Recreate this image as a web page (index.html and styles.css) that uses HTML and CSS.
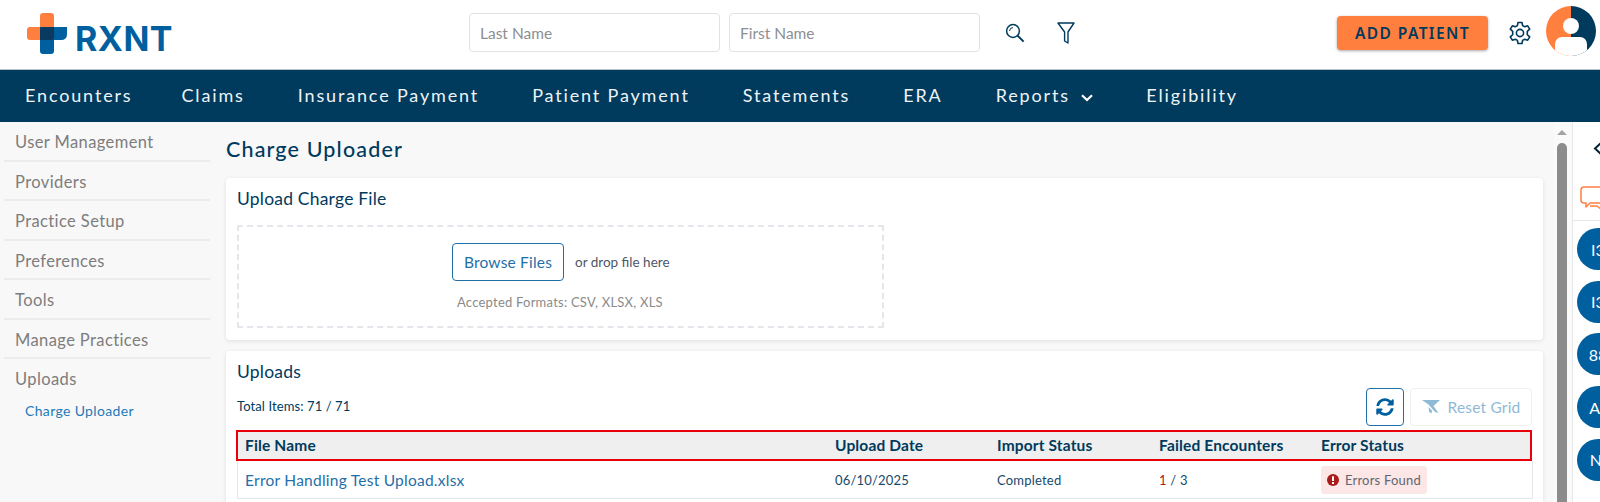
FILE: index.html
```html
<!DOCTYPE html>
<html>
<head>
<link rel="stylesheet" href="styles.css">
</head>
<body>

<header class="top-bar">
  <div class="logo">
    <svg class="logo-mark" width="40" height="41" viewBox="0 0 40 41">
      <path d="M13 3 Q13 0 16 0 H24 Q27 0 27 3 V27 H3 Q0 27 0 24 V17 Q0 14 3 14 H13 Z" fill="#ff7f3f"/>
      <path d="M13 14 H40 V21 Q40 27 34 27 H27 V38 Q27 41 24 41 H16 Q13 41 13 38 Z" fill="#00609f"/>
      <path d="M15 14 H27 V25 Q27 27 25 27 H13 V16 Q13 14 15 14 Z" fill="#0b3a60"/>
    </svg>
    <span class="logo-text">RXNT</span>
  </div>
  <div class="search-area">
    <input class="search-input" type="text" placeholder="Last Name">
    <input class="search-input" type="text" placeholder="First Name">
    <svg class="search-icon" width="20" height="20" viewBox="0 0 20 20" fill="none" stroke="#003a5d" stroke-width="1.5">
      <circle cx="8" cy="8" r="6.4"/>
      <path d="M4.6 8 A3.4 3.4 0 0 1 8 4.6" stroke-width="1"/>
      <path d="M12.6 12.6 L18.6 18.6" stroke-width="2"/>
    </svg>
    <svg class="filter-icon" width="18" height="22" viewBox="0 0 18 22" fill="none" stroke="#003a5d" stroke-width="1.4" stroke-linejoin="round">
      <path d="M1 1 H17 L11 10 V21 L7.6 19 V10 Z"/>
    </svg>
  </div>
  <div class="top-actions">
    <button class="add-patient">ADD PATIENT</button>
    <svg class="gear-icon" width="24" height="24" viewBox="0 0 24 24" fill="none" stroke="#003a5d" stroke-width="1.6" stroke-linejoin="round">
      <path d="M10 1.5 H14 L14.6 4.6 L16.7 5.8 L19.7 4.8 L21.7 8.2 L19.3 10.3 V13.7 L21.7 15.8 L19.7 19.2 L16.7 18.2 L14.6 19.4 L14 22.5 H10 L9.4 19.4 L7.3 18.2 L4.3 19.2 L2.3 15.8 L4.7 13.7 V10.3 L2.3 8.2 L4.3 4.8 L7.3 5.8 L9.4 4.6 Z"/>
      <circle cx="12" cy="12" r="3.6"/>
    </svg>
    <svg class="avatar" width="50" height="50" viewBox="0 0 50 50">
      <clipPath id="avatar-clip"><circle cx="25" cy="25" r="25"/></clipPath>
      <g clip-path="url(#avatar-clip)">
        <rect width="25" height="50" fill="#ff7f3f"/>
        <rect x="25" width="25" height="50" fill="#003a5d"/>
        <circle cx="25" cy="20" r="8" fill="#fff"/>
        <rect x="9" y="31" width="32" height="20" rx="7" fill="#fff"/>
      </g>
    </svg>
  </div>
</header>

<nav class="main-nav">
  <a class="nav-link first-link">Encounters</a>
  <a class="nav-link">Claims</a>
  <a class="nav-link">Insurance Payment</a>
  <a class="nav-link">Patient Payment</a>
  <a class="nav-link">Statements</a>
  <a class="nav-link">ERA</a>
  <a class="nav-link">Reports
    <svg class="nav-chevron" width="12" height="8" viewBox="0 0 12 8" fill="none" stroke="#fff" stroke-width="2.2"><path d="M1 1.2 L6 6 L11 1.2"/></svg>
  </a>
  <a class="nav-link">Eligibility</a>
</nav>

<div class="content-row">
  <aside class="side-menu">
    <div class="side-item">User Management</div>
    <div class="side-item">Providers</div>
    <div class="side-item">Practice Setup</div>
    <div class="side-item">Preferences</div>
    <div class="side-item">Tools</div>
    <div class="side-item">Manage Practices</div>
    <div class="side-item no-line">Uploads</div>
    <div class="side-sub">Charge Uploader</div>
  </aside>

  <main class="page">
    <h1 class="page-title">Charge Uploader</h1>

    <section class="card upload-card">
      <h2 class="card-title">Upload Charge File</h2>
      <div class="drop-zone">
        <div class="drop-row">
          <button class="browse-button">Browse Files</button>
          <span class="drop-text">or drop file here</span>
        </div>
        <div class="accepted">Accepted Formats: CSV, XLSX, XLS</div>
      </div>
    </section>

    <section class="card uploads-card">
      <h2 class="card-title">Uploads</h2>
      <div class="grid-tools">
        <span class="total-items">Total Items: 71 / 71</span>
        <button class="refresh-button">
          <svg width="18" height="18" viewBox="0 0 512 512" fill="#00609f"><path d="M370.7 133.3C339.5 104 298.9 88 255.800 88c-77.500 0-144.400 53.100-162.900 126.900-1.300 5.400-6.100 9.100-11.600 9.100H24.100c-7.500 0-13.200-6.800-11.800-14.200C33.900 94.900 134.800 8 256 8c66.400 0 126.800 26.100 171.300 68.700L463 41c15.100-15.100 41-4.400 41 17v134c0 13.300-10.700 24-24 24H346c-21.400 0-32.100-25.900-17-41zM32 296h134c21.400 0 32.100 25.900 17 41l-41.700 41.700c31.200 29.300 71.800 45.300 114.900 45.300 77.400 0 144.300-53.100 162.900-126.800 1.300-5.400 6.100-9.100 11.600-9.100h57.300c7.500 0 13.200 6.800 11.800 14.200C478.100 417.100 377.200 504 256 504c-66.400 0-126.800-26.100-171.300-68.700L49 471c-15.100 15.100-41 4.400-41-17V320c0-13.300 10.700-24 24-24z"/></svg>
        </button>
        <button class="reset-button">
          <svg width="18" height="16" viewBox="0 0 18 16" fill="#8fbad6"><path d="M0 1 H18 L11.500 7 L16.500 14 L13 13 L6.500 5.500 Z"/><path d="M6.500 8 L10 11.500 L9.500 14.500 L7.200 13 Z"/></svg>
          Reset Grid
        </button>
      </div>
      <div class="grid-head">
        <div class="col-name">File Name</div>
        <div class="col-date">Upload Date</div>
        <div class="col-status">Import Status</div>
        <div class="col-failed">Failed Encounters</div>
        <div class="col-error">Error Status</div>
      </div>
      <div class="grid-row">
        <div class="col-name"><a class="file-link">Error Handling Test Upload.xlsx</a></div>
        <div class="col-date">06/10/2025</div>
        <div class="col-status">Completed</div>
        <div class="col-failed"><span class="failed-count">1</span> / 3</div>
        <div class="col-error">
          <span class="error-badge">
            <svg width="12" height="12" viewBox="0 0 12 12"><circle cx="6" cy="6" r="6" fill="#a81c1c"/><rect x="5" y="2.300" width="2" height="4.700" fill="#fff"/><rect x="5" y="8" width="2" height="2" fill="#fff"/></svg>
            Errors Found
          </span>
        </div>
      </div>
    </section>
  </main>

  <div class="scroll-bar">
    <div class="scroll-arrow"></div>
    <div class="scroll-thumb"></div>
  </div>

  <aside class="side-panel">
    <div class="panel-top">
      <svg class="panel-back" width="9" height="13" viewBox="0 0 9 13" fill="none" stroke="#04243a" stroke-width="2"><path d="M8 1 L2 6.500 L8 12"/></svg>
      <svg class="panel-chat" width="30" height="26" viewBox="0 0 30 26" fill="none" stroke="#ff7f3f" stroke-width="1.500" stroke-linejoin="round">
        <path d="M4 1 H24 Q27 1 27 4 V14 Q27 17 24 17 H10 L6 21 V17 H4 Q1 17 1 14 V4 Q1 1 4 1 Z"/>
        <path d="M10 20 H17 L22 24 V20 H28"/>
      </svg>
    </div>
    <div class="patient-list">
      <div class="patient-dot">I3</div>
      <div class="patient-dot">I3</div>
      <div class="patient-dot">88</div>
      <div class="patient-dot">AJ</div>
      <div class="patient-dot">NI</div>
    </div>
  </aside>
</div>

</body>
</html>
```

FILE: styles.css
```css
* {
  box-sizing: border-box;
}

html, body {
  height: 502px;
  overflow: hidden;
}

body {
  background-color: #f8f8f8;
  color: #003a5d;
  display: flex;
  flex-direction: column;
  font-family: "Lato", "Noto Sans", sans-serif;
  margin: 0;
}

/* Top bar */
.top-bar {
  align-items: center;
  background-color: white;
  border-bottom: 1px solid #b9c4cc;
  display: flex;
  flex: none;
  height: 70px;
  padding-bottom: 4px;
}

.logo {
  align-items: center;
  display: flex;
  margin-left: 27px;
  margin-top: 4px;
  width: 442px;
}

.logo-mark {
  margin-top: -3px;
}

.logo-text {
  color: #00609f;
  font-family: "Inter", sans-serif;
  font-size: 34px;
  font-weight: 700;
  letter-spacing: 0.5px;
  margin-left: 8px;
  margin-top: 7px;
}

.search-area {
  align-items: center;
  display: flex;
}

.search-input {
  border: 1px solid #dfe3e6;
  border-radius: 4px;
  color: #003a5d;
  font-family: inherit;
  font-size: 15.500px;
  height: 39px;
  margin-right: 9px;
  outline: none;
  padding: 0 10px;
  width: 251px;
}

.search-input::placeholder {
  color: #8d8f92;
}

.search-icon {
  margin-left: 16px;
}

.filter-icon {
  margin-left: 32px;
}

.top-actions {
  align-items: center;
  display: flex;
  margin-left: 262px;
}

.add-patient {
  background-color: #ff7f3f;
  border: none;
  border-radius: 4px;
  box-shadow: 0 1px 3px rgba(0, 0, 0, 0.35);
  color: #003a5d;
  font-family: "Noto Sans", sans-serif;
  font-size: 15.500px;
  font-weight: 600;
  height: 34px;
  letter-spacing: 1.400px;
  padding: 0;
  width: 151px;
}

.gear-icon {
  margin-left: 20px;
}

.avatar {
  margin-left: 14px;
  margin-top: -3px;
}

/* Main nav */
.main-nav {
  align-items: center;
  background-color: #003a5d;
  display: flex;
  flex: none;
  gap: 53px;
  height: 52px;
  padding-bottom: 3px;
  padding-left: 25px;
}

.nav-link {
  color: #eef3f6;
  font-size: 18px;
  letter-spacing: 1.850px;
  white-space: nowrap;
}

.first-link {
  margin-right: -4px;
}

.nav-chevron {
  margin-left: 5px;
}

/* Content */
.content-row {
  display: flex;
  flex: 1;
  min-height: 0;
}

.side-menu {
  flex: none;
  margin-left: 4px;
  width: 206px;
}

.side-item {
  border-bottom: 2px solid #ececec;
  color: #7d7d7d;
  font-size: 16.500px;
  height: 39.500px;
  letter-spacing: 0.400px;
  padding: 10px 0 0 11px;
}

.no-line {
  border-bottom: none;
}

.side-sub {
  color: #1f7ab8;
  font-size: 14px;
  letter-spacing: 0.350px;
  padding: 3px 0 0 21px;
}

.page {
  flex: none;
  margin-left: 16px;
  width: 1317px;
}

.page-title {
  color: #003a5d;
  font-size: 21.500px;
  font-weight: 500;
  letter-spacing: 1.150px;
  margin: 14px 0 16px;
}

.card {
  background-color: white;
  border-radius: 4px;
  box-shadow: 0 1px 4px rgba(0, 0, 0, 0.1);
  padding: 10px 11px 0;
}

.upload-card {
  height: 162px;
  margin-bottom: 11px;
}

.uploads-card {
  border-radius: 4px 4px 0 0;
  height: 151px;
}

.card-title {
  color: #003a5d;
  font-size: 17.500px;
  font-weight: 400;
  letter-spacing: 0.200px;
  margin: 0;
}

.drop-zone {
  border: 2px dashed #e3e7eb;
  height: 103px;
  margin-top: 16px;
  padding-top: 16px;
  width: 647px;
}

.drop-row {
  align-items: center;
  display: flex;
  margin-left: 213px;
}

.browse-button {
  background-color: white;
  border: 1px solid #1f6fa8;
  border-radius: 4px;
  color: #1f6fa8;
  font-family: inherit;
  font-size: 15.500px;
  height: 38px;
  letter-spacing: 0.200px;
  padding: 0;
  width: 112px;
}

.drop-text {
  color: #4d5666;
  font-size: 13.500px;
  margin-left: 11px;
}

.accepted {
  color: #8a8a8a;
  font-size: 13px;
  letter-spacing: 0.230px;
  margin: 13px 0 0 218px;
}

.grid-tools {
  align-items: flex-start;
  display: flex;
  height: 42px;
  margin-top: 6px;
}

.total-items {
  color: #003a5d;
  font-size: 13px;
  letter-spacing: 0.100px;
  margin-top: 10px;
}

.refresh-button {
  align-items: center;
  background-color: white;
  border: 1px solid #1f6fa8;
  border-radius: 4px;
  display: flex;
  height: 38px;
  justify-content: center;
  margin-left: auto;
  padding: 0;
  width: 38px;
}

.reset-button {
  align-items: center;
  background-color: white;
  border: 1px solid #f0f0f0;
  border-radius: 4px;
  color: #8fbad6;
  display: flex;
  font-family: inherit;
  font-size: 15.500px;
  gap: 8px;
  height: 38px;
  justify-content: center;
  letter-spacing: 0.200px;
  margin-left: 6px;
  padding: 0;
  width: 122px;
}

.grid-head,
.grid-row {
  display: flex;
  padding-left: 7px;
  width: 1296px;
}

.grid-head {
  align-items: center;
  background-color: #efefef;
  border: 2px solid #e8000b;
  color: #003a5d;
  font-size: 15.500px;
  font-weight: 700;
  height: 31px;
  letter-spacing: 0.150px;
  margin-left: -1px;
  padding-bottom: 1px;
}

.grid-row {
  align-items: center;
  border-bottom: 1px solid #e6e6e6;
  border-left: 1px solid #e6e6e6;
  border-right: 1px solid #e6e6e6;
  color: #174a6c;
  font-size: 13px;
  height: 38px;
  letter-spacing: 0.200px;
}

.col-name {
  width: 590px;
}

.col-date,
.col-status,
.col-failed {
  width: 162px;
}

.col-error {
  flex: 1;
}

.file-link {
  color: #1f6fa8;
  font-size: 15.500px;
  letter-spacing: 0.250px;
}

.failed-count {
  color: #a81c1c;
}

.error-badge {
  align-items: center;
  background-color: #fde6e6;
  border-radius: 3px;
  color: #5d6672;
  display: inline-flex;
  gap: 6px;
  height: 28px;
  padding: 0 6px;
  width: 106px;
}

/* Scroll bar */
.scroll-bar {
  background-color: #fafafa;
  flex: none;
  margin-left: 11px;
  width: 18px;
}

.scroll-arrow {
  border-bottom: 5px solid #a3a3a3;
  border-left: 5px solid transparent;
  border-right: 5px solid transparent;
  height: 0;
  margin: 8px 0 0 3px;
  width: 0;
}

.scroll-thumb {
  background-color: #8c8c8c;
  border-radius: 5px 5px 0 0;
  height: 360px;
  margin: 8px 0 0 3px;
  width: 10px;
}

/* Right panel */
.side-panel {
  background-color: white;
  border-left: 1px solid #e8e8e8;
  flex: 1;
  overflow: hidden;
}

.panel-top {
  border-bottom: 1px solid #e6e6e6;
  height: 99px;
  padding: 20px 0 0 20px;
}

.panel-back {
  display: block;
}

.panel-chat {
  display: block;
  margin: 31px 0 0 -13px;
}

.patient-list {
  display: flex;
  flex-direction: column;
  gap: 10.700px;
  margin-left: 4px;
  padding-top: 7px;
}

.patient-dot {
  align-items: center;
  background-color: #00609f;
  border-radius: 50%;
  color: white;
  display: flex;
  flex: none;
  font-size: 16px;
  height: 42px;
  justify-content: center;
  width: 42px;
}
```
